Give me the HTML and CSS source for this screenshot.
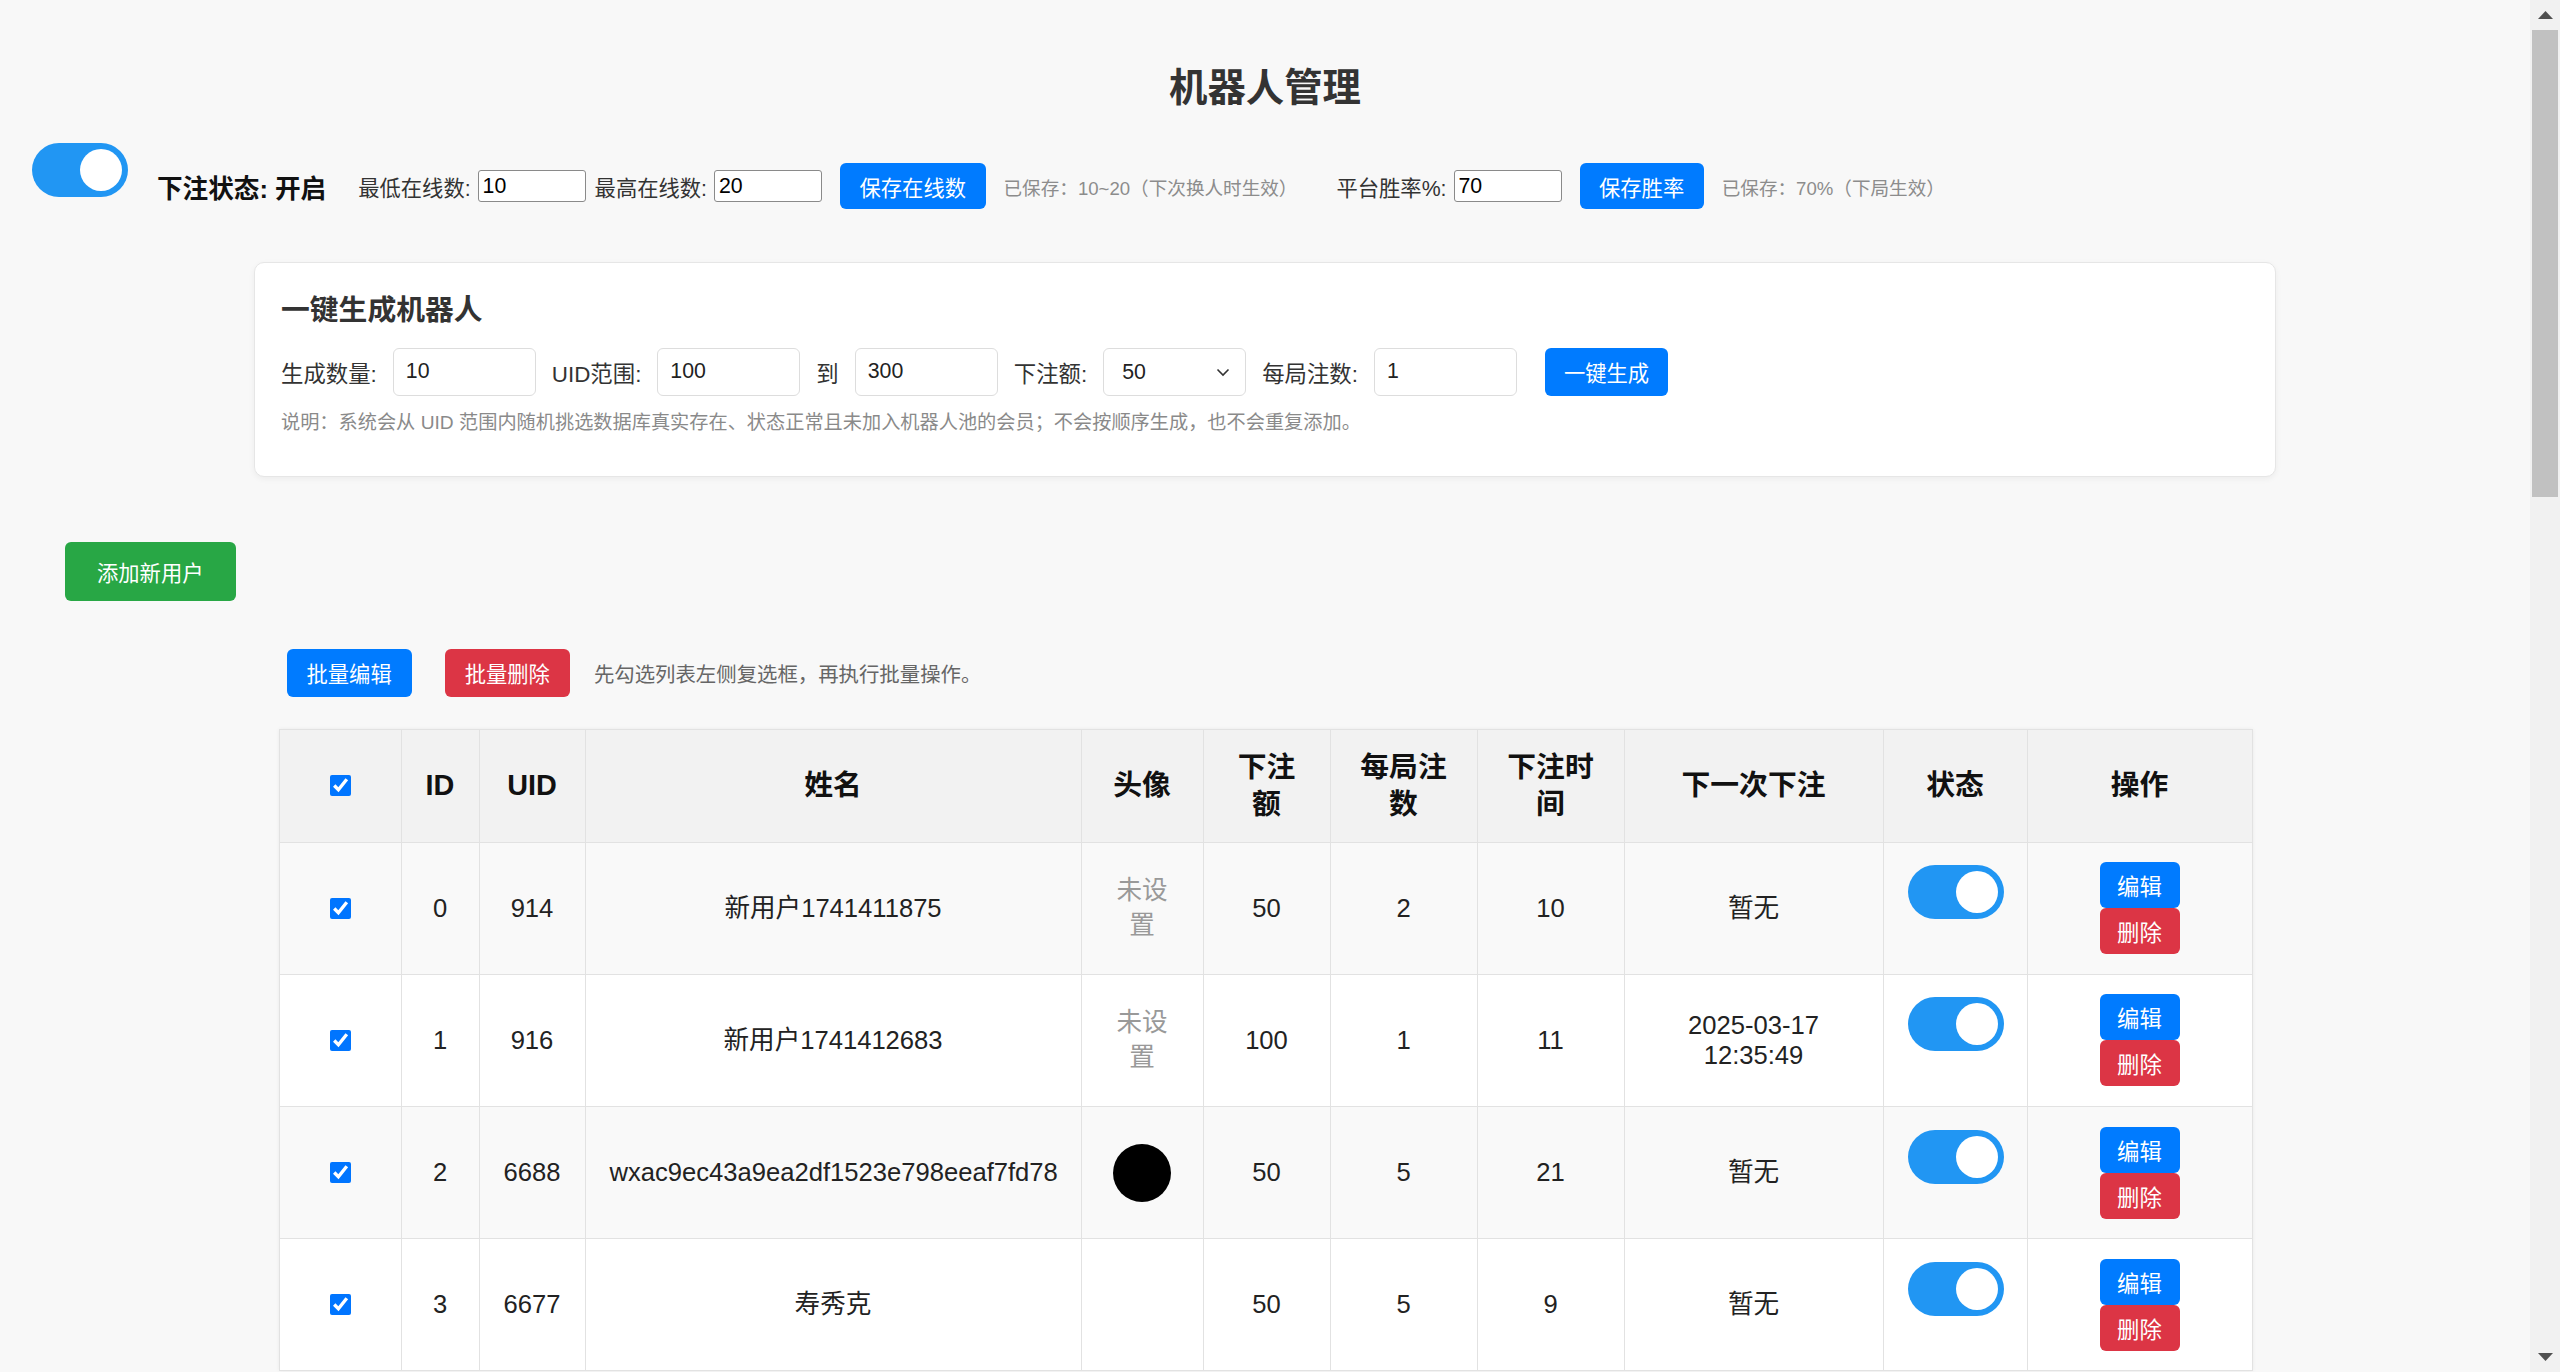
FILE: index.html
```html
<!DOCTYPE html>
<html lang="zh-CN">
<head>
<meta charset="utf-8">
<title>机器人管理</title>
<link rel="stylesheet" href="styles.css">
</head>
<body>
<h1 class="page-title">机器人管理</h1>

<div class="topbar">
  <label class="switch switch-main"><span class="knob"></span></label>
  <span class="status-text">下注状态: 开启</span>
  <span class="lbl lbl-min">最低在线数:</span>
  <input class="tinput" type="text" value="10">
  <span class="lbl lbl-max">最高在线数:</span>
  <input class="tinput" type="text" value="20">
  <button class="btn btn-blue btn-top">保存在线数</button>
  <span class="saved">已保存：10~20（下次换人时生效）</span>
  <span class="lbl lbl-rate">平台胜率%:</span>
  <input class="tinput" type="text" value="70">
  <button class="btn btn-blue btn-top">保存胜率</button>
  <span class="saved">已保存：70%（下局生效）</span>
</div>

<section class="card">
  <h3 class="card-title">一键生成机器人</h3>
  <div class="gen-row">
    <span class="glbl">生成数量:</span>
    <input class="ginput" type="text" value="10">
    <span class="glbl">UID范围:</span>
    <input class="ginput" type="text" value="100">
    <span class="glbl">到</span>
    <input class="ginput" type="text" value="300">
    <span class="glbl">下注额:</span>
    <div class="gselect">
      <select><option>50</option><option>100</option></select>
      <svg class="chev" width="14" height="9" viewBox="0 0 14 9"><path d="M1.5 1.5 L7 7 L12.5 1.5" fill="none" stroke="#333" stroke-width="1.6"/></svg>
    </div>
    <span class="glbl">每局注数:</span>
    <input class="ginput" type="text" value="1">
    <button class="btn btn-blue btn-gen">一键生成</button>
  </div>
  <p class="gen-note">说明：系统会从 UID 范围内随机挑选数据库真实存在、状态正常且未加入机器人池的会员；不会按顺序生成，也不会重复添加。</p>
</section>

<button class="btn btn-green btn-add">添加新用户</button>

<div class="list-wrap">
  <div class="batch-bar">
    <button class="btn btn-blue btn-batch">批量编辑</button>
    <button class="btn btn-red btn-batch">批量删除</button>
    <span class="batch-hint">先勾选列表左侧复选框，再执行批量操作。</span>
  </div>

  <table class="bots">
    <colgroup>
      <col class="c-chk"><col class="c-id"><col class="c-uid"><col class="c-name"><col class="c-av">
      <col class="c-amt"><col class="c-per"><col class="c-time"><col class="c-next"><col class="c-st"><col class="c-op">
    </colgroup>
    <thead>
      <tr>
        <th><input class="chk" type="checkbox" checked></th>
        <th>ID</th>
        <th>UID</th>
        <th>姓名</th>
        <th>头像</th>
        <th>下注额</th>
        <th>每局注数</th>
        <th>下注时间</th>
        <th>下一次下注</th>
        <th>状态</th>
        <th>操作</th>
      </tr>
    </thead>
    <tbody>
      <tr>
        <td><input class="chk" type="checkbox" checked></td>
        <td>0</td>
        <td>914</td>
        <td class="name">新用户1741411875</td>
        <td class="na">未设置</td>
        <td>50</td>
        <td>2</td>
        <td>10</td>
        <td>暂无</td>
        <td><label class="switch switch-cell"><span class="knob"></span></label></td>
        <td><button class="btn btn-blue btn-op">编辑</button><button class="btn btn-red btn-op">删除</button></td>
      </tr>
      <tr>
        <td><input class="chk" type="checkbox" checked></td>
        <td>1</td>
        <td>916</td>
        <td class="name">新用户1741412683</td>
        <td class="na">未设置</td>
        <td>100</td>
        <td>1</td>
        <td>11</td>
        <td>2025-03-17 12:35:49</td>
        <td><label class="switch switch-cell"><span class="knob"></span></label></td>
        <td><button class="btn btn-blue btn-op">编辑</button><button class="btn btn-red btn-op">删除</button></td>
      </tr>
      <tr>
        <td><input class="chk" type="checkbox" checked></td>
        <td>2</td>
        <td>6688</td>
        <td class="name">wxac9ec43a9ea2df1523e798eeaf7fd78</td>
        <td><span class="avatar"></span></td>
        <td>50</td>
        <td>5</td>
        <td>21</td>
        <td>暂无</td>
        <td><label class="switch switch-cell"><span class="knob"></span></label></td>
        <td><button class="btn btn-blue btn-op">编辑</button><button class="btn btn-red btn-op">删除</button></td>
      </tr>
      <tr>
        <td><input class="chk" type="checkbox" checked></td>
        <td>3</td>
        <td>6677</td>
        <td class="name">寿秀克</td>
        <td></td>
        <td>50</td>
        <td>5</td>
        <td>9</td>
        <td>暂无</td>
        <td><label class="switch switch-cell"><span class="knob"></span></label></td>
        <td><button class="btn btn-blue btn-op">编辑</button><button class="btn btn-red btn-op">删除</button></td>
      </tr>
    </tbody>
  </table>
</div>

<div class="fake-scrollbar" aria-hidden="true">
  <div class="sb-btn"><svg width="15" height="8" viewBox="0 0 15 8"><path d="M0 8 L7.5 0 L15 8 Z" fill="#505050"/></svg></div>
  <div class="sb-track"><div class="sb-thumb"></div></div>
  <div class="sb-btn"><svg width="15" height="8" viewBox="0 0 15 8"><path d="M0 0 L15 0 L7.5 8 Z" fill="#505050"/></svg></div>
</div>
</body>
</html>
```

FILE: styles.css
```css
html {
  background: #f8f8f8;
}

body {
  width: 2530px;
  margin: 0;
  padding: 0 32px 120px;
  box-sizing: border-box;
  background: #f8f8f8;
  color: #333;
  font-family: "Liberation Sans", "Noto Sans CJK SC", sans-serif;
}

/* ---------- scrollbar look (overlay at the right edge) ---------- */
.fake-scrollbar {
  position: fixed;
  top: 0;
  right: 0;
  bottom: 0;
  width: 30px;
  display: flex;
  flex-direction: column;
  background: #f1f1f1;
}
.sb-btn {
  height: 30px;
  flex: none;
  display: flex;
  align-items: center;
  justify-content: center;
}
.sb-track {
  flex: 1;
}
.sb-thumb {
  height: 467px;
  margin: 0 2px;
  background: #c1c1c1;
}

/* ---------- title ---------- */
.page-title {
  margin: 65px 0 32px;
  text-align: center;
  font-size: 38.4px;
  line-height: 1.2;
  font-weight: bold;
  color: #333;
}

/* ---------- generic buttons ---------- */
.btn {
  border: 0;
  border-radius: 6px;
  color: #fff;
  font-family: inherit;
  cursor: pointer;
  padding: 0;
}
.btn-blue { background: #007bff; }
.btn-red { background: #dc3545; }
.btn-green { background: #28a745; }

/* ---------- switch ---------- */
.switch {
  display: block;
  position: relative;
  width: 96px;
  height: 54px;
  border-radius: 27px;
  background: #2196f3;
  flex: none;
}
.knob {
  position: absolute;
  top: 6px;
  right: 6px;
  width: 42px;
  height: 42px;
  border-radius: 50%;
  background: #fff;
}

/* ---------- top bar ---------- */
.topbar {
  display: flex;
  align-items: center;
  white-space: nowrap;
}
.switch-main {
  margin-bottom: 32px;
}
.status-text {
  margin-left: 29px;
  font-size: 25.6px;
  font-weight: bold;
  color: #111;
}
.lbl {
  font-size: 21.3px;
  color: #333;
}
.lbl-min { margin-left: 32px; }
.lbl-max { margin-left: 9px; }
.lbl-rate { margin-left: 39px; }
.tinput {
  box-sizing: border-box;
  width: 108px;
  height: 32px;
  margin-left: 7px;
  padding: 0 4px;
  border: 1px solid #8a8a8a;
  border-radius: 3px;
  background: #fff;
  font-family: inherit;
  font-size: 21.3px;
  color: #000;
}
.btn-top {
  height: 46px;
  margin-left: 18px;
  padding: 0 19.5px;
  font-size: 21.3px;
}
.saved {
  margin-left: 18px;
  font-size: 18.6px;
  color: #8c8c8c;
}

/* ---------- generator card ---------- */
.card {
  width: 2022px;
  box-sizing: border-box;
  margin: 33px auto 0;
  padding: 30px 26px 40px;
  background: #fff;
  border: 1px solid #e6e6e6;
  border-radius: 10px;
  box-shadow: 0 2px 6px rgba(0, 0, 0, 0.05);
}
.card-title {
  margin: 0 0 20px;
  font-size: 28.8px;
  line-height: 1.2;
  font-weight: bold;
  color: #333;
}
.gen-row {
  display: flex;
  align-items: center;
  gap: 16px;
  white-space: nowrap;
}
.glbl {
  font-size: 22.4px;
  color: #333;
}
.ginput {
  box-sizing: border-box;
  width: 143px;
  height: 48px;
  padding: 0 12px;
  border: 1px solid #ddd;
  border-radius: 6px;
  background: #fff;
  font-family: inherit;
  font-size: 21.3px;
  color: #222;
}
.gselect {
  position: relative;
  width: 143px;
  height: 48px;
}
.gselect select {
  box-sizing: border-box;
  width: 100%;
  height: 100%;
  padding: 0 18px;
  border: 1px solid #ddd;
  border-radius: 6px;
  background: #fff;
  font-family: inherit;
  font-size: 21.3px;
  color: #222;
  appearance: none;
  -webkit-appearance: none;
}
.chev {
  position: absolute;
  right: 16px;
  top: 20px;
  pointer-events: none;
}
.btn-gen {
  height: 48px;
  margin-left: 12px;
  padding: 0 19px;
  font-size: 21.3px;
}
.gen-note {
  margin: 15px 0 0;
  font-size: 19.2px;
  line-height: 1.3;
  color: #8a8a8a;
}

/* ---------- add user ---------- */
.btn-add {
  display: block;
  height: 59px;
  margin: 65px 0 0 33px;
  padding: 0 32px;
  font-size: 21.3px;
}

/* ---------- list ---------- */
.list-wrap {
  width: 1973px;
  margin: 48px auto 0;
}
.batch-bar {
  display: flex;
  align-items: center;
  padding-left: 8px;
  white-space: nowrap;
}
.btn-batch {
  height: 48px;
  padding: 0 20px;
  margin-right: 33px;
  font-size: 21.3px;
}
.btn-batch + .btn-batch {
  margin-right: 24px;
}
.batch-hint {
  font-size: 20.4px;
  color: #666;
}

.bots {
  width: 1973px;
  margin-top: 32px;
  table-layout: fixed;
  border-collapse: collapse;
  background: #fff;
  box-shadow: 0 0 4px rgba(0, 0, 0, 0.06);
}
.c-chk { width: 122px; }
.c-id { width: 78px; }
.c-uid { width: 106px; }
.c-name { width: 496px; }
.c-av { width: 122px; }
.c-amt { width: 127px; }
.c-per { width: 147px; }
.c-time { width: 147px; }
.c-next { width: 259px; }
.c-st { width: 144px; }
.c-op { width: 225px; }

.bots th,
.bots td {
  border: 1px solid #e2e2e2;
  padding: 19.6px 24px;
  text-align: center;
  vertical-align: middle;
}
.bots th {
  padding-top: 19.2px;
  padding-bottom: 19.2px;
  background: #f2f2f2;
  font-size: 28.8px;
  line-height: 1.28;
  font-weight: bold;
  color: #111;
}
.bots td {
  font-size: 25.6px;
  line-height: 1.2;
  color: #222;
}
.bots tbody tr:nth-child(odd) td {
  background: #f9f9f9;
}
.bots td.name {
  white-space: nowrap;
  overflow: visible;
}
.bots td.na {
  color: #999;
  line-height: 1.37;
}
.chk {
  display: block;
  width: 21px;
  height: 21px;
  margin: 0 auto;
  accent-color: #0075ff;
}
.avatar {
  display: block;
  width: 58px;
  height: 58px;
  margin: 0 auto;
  border-radius: 50%;
  background: #000;
}
.switch-cell {
  margin: 0 auto 32px;
}
.btn-op {
  display: block;
  width: 80px;
  height: 46px;
  margin: 0 auto;
  font-size: 22.4px;
}
```
